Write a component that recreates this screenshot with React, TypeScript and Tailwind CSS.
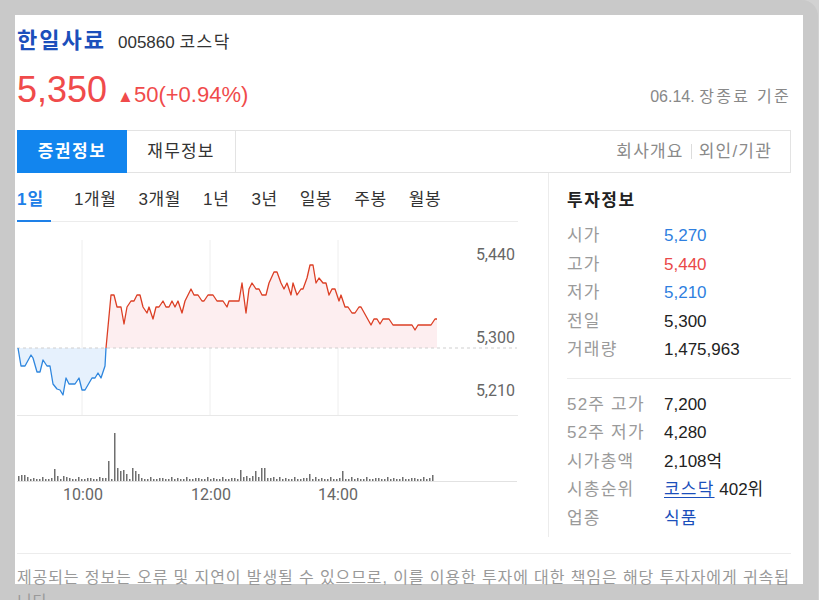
import React from 'react';

type Pt = [number, number];

// price line, page coordinates (chart svg uses the same numbers through its viewBox)
const fallPts: Pt[] = [
  [18, 347], [21, 365], [25, 365], [31, 354], [33, 357], [37, 371], [40, 371], [43, 359], [47, 365],
  [50, 365], [53, 383], [57, 388], [60, 389], [63, 394], [66, 377], [69, 383], [75, 383], [79, 377],
  [82, 389], [85, 389], [92, 377], [95, 377], [98, 372], [101, 377], [105, 365], [106, 347],
];

const risePts: Pt[] = [
  [106, 347], [111, 294], [114, 294], [117, 306], [121, 306], [124, 323], [127, 306], [131, 300],
  [134, 300], [137, 294], [140, 294], [143, 306], [147, 312], [149, 306], [153, 318], [156, 306],
  [159, 306], [163, 300], [166, 306], [169, 306], [172, 300], [175, 306], [178, 300], [182, 312],
  [185, 300], [191, 288], [194, 294], [198, 294], [202, 300], [204, 300], [208, 294], [213, 294],
  [217, 300], [223, 300], [227, 306], [229, 300], [239, 300], [242, 282], [246, 312], [249, 288],
  [252, 282], [256, 288], [259, 288], [262, 294], [266, 294], [269, 282], [274, 271], [277, 271],
  [281, 282], [284, 288], [287, 282], [291, 294], [293, 282], [297, 294], [301, 288], [303, 288],
  [307, 277], [310, 264], [313, 264], [316, 282], [319, 277], [323, 282], [326, 282], [329, 294],
  [332, 288], [335, 288], [339, 300], [341, 294], [345, 306], [348, 306], [352, 312], [355, 312],
  [359, 306], [361, 306], [371, 324], [374, 318], [377, 318], [380, 323], [383, 318], [389, 318],
  [393, 324], [412, 324], [415, 329], [418, 324], [431, 324], [435, 318], [437, 318],
];

const BASE_Y = 347;
const VOL_Y = 480;

const toLine = (pts: Pt[]) => pts.map(([x, y]) => `${x},${y}`).join(' ');
const toArea = (pts: Pt[]) => {
  const first = pts[0];
  const last = pts[pts.length - 1];
  return `${first[0]},${BASE_Y} ${toLine(pts)} ${last[0]},${BASE_Y}`;
};

// notable volume spikes, x -> height
const spikes: Record<number, number> = {
  18: 5, 21: 6, 24: 6, 54: 12, 57: 5, 63: 5, 66: 4, 102: 3, 108: 20, 114: 48, 117: 13, 120: 10,
  123: 11, 126: 7, 132: 13, 135: 10, 138: 7, 240: 11, 246: 5, 252: 5, 255: 10, 261: 13, 264: 13,
  273: 4, 309: 7, 342: 10, 432: 6,
};
const pattern = [3, 2, 2, 4, 2, 3, 2, 2, 4, 2, 2, 3];

const volumeBars = () => {
  const bars: { x: number; h: number }[] = [];
  for (let i = 0; i < 139; i++) {
    const x = 18 + i * 3;
    bars.push({ x, h: spikes[x] ?? pattern[i % pattern.length] });
  }
  return bars;
};

const PriceChart: React.FC = () => (
  <svg width={501} height={284} viewBox="17 221 501 284" className="block">
    {[82, 210, 338].map((x) => (
      <line key={x} x1={x} y1={239} x2={x} y2={414} stroke="#eeeeee" strokeWidth={1} />
    ))}
    <line x1={17} y1={414.5} x2={518} y2={414.5} stroke="#e8e8e8" strokeWidth={1} />

    <polygon points={toArea(fallPts)} fill="#e6f1fd" />
    <polygon points={toArea(risePts)} fill="#fdeef0" />
    <line x1={17} y1={BASE_Y} x2={517} y2={BASE_Y} stroke="#cfcfcf" strokeWidth={1} strokeDasharray="3 3" />
    <polyline points={toLine(fallPts)} fill="none" stroke="#2e86de" strokeWidth={1.3} strokeLinejoin="round" />
    <polyline points={toLine(risePts)} fill="none" stroke="#dc3f25" strokeWidth={1.3} strokeLinejoin="round" />

    <g fontFamily="Roboto, sans-serif" fontSize={16} fill="#666" textAnchor="end">
      <text x={515} y={259}>5,440</text>
      <text x={515} y={342}>5,300</text>
      <text x={515} y={395}>5,210</text>
    </g>

    {volumeBars().map((b) => (
      <rect key={b.x} x={b.x} y={VOL_Y - b.h} width={1.5} height={b.h} fill="#6f6f6f" />
    ))}
    <line x1={17} y1={VOL_Y + 0.5} x2={517} y2={VOL_Y + 0.5} stroke="#e2e2e2" strokeWidth={1} />

    <g fontFamily="Roboto, sans-serif" fontSize={16} fill="#666" textAnchor="middle">
      <text x={83} y={499}>10:00</text>
      <text x={211} y={499}>12:00</text>
      <text x={338} y={499}>14:00</text>
    </g>
  </svg>
);

const periods = ['1개월', '3개월', '1년', '3년', '일봉', '주봉', '월봉'];

interface InfoRow {
  label: string;
  value: React.ReactNode;
}

const dayRows: InfoRow[] = [
  { label: '시가', value: <span className="text-[#2f7fe0]">5,270</span> },
  { label: '고가', value: <span className="text-[#ea4848]">5,440</span> },
  { label: '저가', value: <span className="text-[#2f7fe0]">5,210</span> },
  { label: '전일', value: '5,300' },
  { label: '거래량', value: '1,475,963' },
];

const yearRows: InfoRow[] = [
  { label: '52주 고가', value: '7,200' },
  { label: '52주 저가', value: '4,280' },
  { label: '시가총액', value: <>2,108<span className="tracking-[1px]">억</span></> },
  {
    label: '시총순위',
    value: (
      <>
        <span className="text-[#1b4fbb] underline underline-offset-2 tracking-[1.2px]">코스닥</span> 402위
      </>
    ),
  },
  { label: '업종', value: <span className="text-[#1b4fbb] tracking-[1.2px]">식품</span> },
];

const InfoList: React.FC<{ rows: InfoRow[] }> = ({ rows }) => (
  <div className="grid grid-cols-[97px_1fr] text-[17px] leading-[28.5px]">
    {rows.map((r) => (
      <React.Fragment key={r.label}>
        <span className="text-[#9a9a9a] tracking-[1.2px]">{r.label}</span>
        <span className="text-[#222]">{r.value}</span>
      </React.Fragment>
    ))}
  </div>
);

const App: React.FC = () => {
  return (
    <div className="w-[819px] h-[600px] overflow-hidden bg-[#d2d2d2] font-['Liberation_Sans','Noto_Sans_CJK_KR',sans-serif]">
      <div className="h-full w-[818px] rounded-tr-[16px] bg-[#c9c9c9] pl-[15px] pt-[15px]">
        <div className="w-[788px] h-[569px] bg-white pl-[2px] pr-[12px] pt-[11px]">
          {/* stock name */}
          <div className="flex items-baseline h-[30px] leading-[30px]">
            <h1 className="text-[22px] font-bold tracking-[2px] text-[#1b4fbb]">한일사료</h1>
            <span className="ml-[12px] text-[17px] text-[#333]">
              005860 <span className="tracking-[1.5px]">코스닥</span>
            </span>
          </div>

          {/* price */}
          <div className="mt-[14px] flex h-[40px] items-baseline justify-between leading-[40px]">
            <div className="flex items-baseline text-[#f04b4b]">
              <span className="text-[36px]">5,350</span>
              <span className="ml-[10px] text-[17px]">▲</span>
              <span className="text-[22px]">50(+0.94%)</span>
            </div>
            <span className="text-[16px] text-[#888]">
              06.14. <span className="tracking-[2.3px]">장종료 기준</span>
            </span>
          </div>

          {/* main tabs */}
          <div className="mt-[20px] flex h-[43px]">
            <div className="flex w-[110px] items-center justify-center bg-[#1285ee] text-[17px] font-bold tracking-[1.5px] text-white">
              증권정보
            </div>
            <div className="flex flex-1 items-center border-y border-r border-[#e3e3e3]">
              <div className="flex h-full w-[109px] items-center justify-center border-r border-[#e3e3e3] text-[17px] tracking-[1.2px] text-[#333]">
                재무정보
              </div>
              <div className="ml-auto flex items-center pr-[18px] text-[17px] tracking-[1.2px] text-[#8a8a8a]">
                <span>회사개요</span>
                <span className="mx-[7px] h-[15px] w-px bg-[#dcdcdc]" />
                <span>외인/기관</span>
              </div>
            </div>
          </div>

          <div className="flex h-[364px]">
            {/* chart column */}
            <div className="w-[501px]">
              <div className="flex h-[49px] gap-[22px] border-b border-[#ececec] text-[17px] text-[#333]">
                <div className="-mb-px mr-[1px] flex w-[34px] items-center border-b-2 border-[#1e80e8] pt-[6px] font-bold tracking-[1px] text-[#1e80e8]">
                  1일
                </div>
                {periods.map((p) => (
                  <div key={p} className="flex items-center pt-[6px] tracking-[0.6px]">
                    {p}
                  </div>
                ))}
              </div>
              <PriceChart />
            </div>

            {/* investment info */}
            <div className="ml-[30px] flex-1 border-l border-[#ececec] pl-[18px] pt-[16px]">
              <h2 className="text-[17px] font-bold leading-[24px] tracking-[1.5px] text-[#222]">투자정보</h2>
              <div className="mt-[9px]">
                <InfoList rows={dayRows} />
              </div>
              <div className="mt-[13px] border-t border-[#ececec] pt-[12px]">
                <InfoList rows={yearRows} />
              </div>
            </div>
          </div>

          <div className="mt-[16px] border-t border-[#ececec] pt-[12px] text-[16px] leading-[24px] tracking-[0.9px] text-[#999]">
            제공되는 정보는 오류 및 지연이 발생될 수 있으므로, 이를 이용한 투자에 대한 책임은 해당 투자자에게 귀속됩니다.
          </div>
        </div>
      </div>
    </div>
  );
};

export default App;
